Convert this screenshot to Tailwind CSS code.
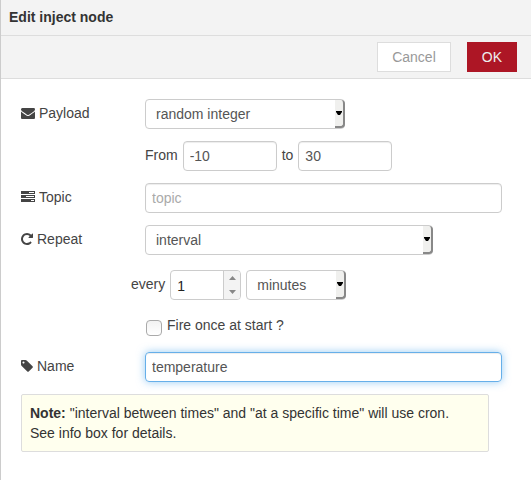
<!DOCTYPE html>
<html lang="en">
<head>
<meta charset="utf-8">
<meta name="viewport" content="width=device-width, initial-scale=1">
<title>Edit inject node</title>
<script src="https://cdn.jsdelivr.net/npm/@tailwindcss/browser@4"></script>
</head>
<body class="bg-white">
<main class="min-h-screen border-l border-[#ccc] font-['Liberation_Sans',Arial,sans-serif] text-sm leading-5 text-[#444]">
  <header class="border-b border-[#ddd] bg-[#f3f3f3] px-2 pt-[7px] pb-2">
    <h1 class="font-bold text-[#333]">Edit inject node</h1>
  </header>
  <div class="flex justify-end gap-4 border-b border-[#ddd] bg-[#f3f3f3] py-1.5 pr-3.5">
    <button type="button" class="h-[30px] border border-[#ddd] bg-white px-3.5 text-[#999]">Cancel</button>
    <button type="button" class="h-[30px] border border-[#ad1625] bg-[#ad1625] px-3.5 text-[#eee]">OK</button>
  </div>

  <form class="pt-5 pr-[29px] pl-5">
    <div class="flex items-center">
      <label for="payload" class="flex w-[124px] items-center gap-1 pb-0.5">
        <svg class="size-3.5" viewBox="0 0 1792 1792" fill="currentColor" aria-hidden="true"><path d="M1792 710v794q0 66-47 113t-113 47h-1472q-66 0-113-47t-47-113v-794q44 49 101 87 362 246 497 345 57 42 92.5 65.5t94.5 48 110 24.5h2q51 0 110-24.5t94.5-48 92.5-65.5q170-123 498-345 57-39 100-87zm0-294q0 79-49 151t-122 123q-376 261-468 325-10 7-42.5 31t-54 38.5-52 32.5-57.5 27-50 9h-2q-23 0-50-9t-57.5-27-52-32.5-54-38.5-42.5-31q-91-64-262-182.5t-205-142.5q-62-42-117-115.5t-55-136.5q0-78 41.5-130t118.5-52h1472q65 0 112.5 47t47.5 113z"/></svg>
        Payload
      </label>
      <div class="relative">
        <select id="payload" class="h-[30px] w-[200px] appearance-none rounded border border-[#ccc] bg-white px-2.5 text-[#555]"><option>random integer</option></select>
        <span class="pointer-events-none absolute inset-y-px right-0 flex w-2.5 items-center justify-center rounded-r border-r-2 border-b-2 border-[#888] bg-[#f0f0ee]"><svg class="h-1 w-1.5" viewBox="0 0 6 4" aria-hidden="true"><path d="M0 0h6v1L4 4H2L0 1z"/></svg></span>
      </div>
    </div>

    <div class="mt-3 flex items-center gap-[5px] pl-[124px]">
      <label for="from" class="pb-0.5">From</label>
      <input id="from" type="text" value="-10" class="h-[30px] w-[94px] rounded border border-[#ccc] px-1.5 text-[#555] shadow-[inset_0_1px_1px_rgba(0,0,0,0.075)]">
      <label for="to" class="pb-0.5">to</label>
      <input id="to" type="text" value="30" class="h-[30px] w-[94px] rounded border border-[#ccc] px-1.5 text-[#555] shadow-[inset_0_1px_1px_rgba(0,0,0,0.075)]">
    </div>

    <div class="mt-3 flex items-center">
      <label for="topic" class="flex w-[124px] items-center gap-1 pb-0.5">
        <svg class="size-3.5" viewBox="0 0 14 14" fill="currentColor" fill-rule="evenodd" aria-hidden="true"><path d="M0 1h14v3H0zM8 2v1h5V2zM0 5h14v3H0zM5 6v1h8V6zM0 9h14v3H0zM10 10v1h3v-1z"/></svg>
        Topic
      </label>
      <input id="topic" type="text" placeholder="topic" class="h-[30px] min-w-0 flex-1 rounded border border-[#ccc] px-1.5 text-[#555] shadow-[inset_0_1px_1px_rgba(0,0,0,0.075)] placeholder:text-[#aaa]">
    </div>

    <div class="mt-3 flex items-center">
      <label for="repeat" class="flex w-[124px] items-center gap-1 pb-0.5">
        <svg class="h-3.5 w-3" viewBox="128 0 1536 1792" fill="currentColor" aria-hidden="true"><path d="M1664 256v448q0 26-19 45t-45 19h-448q-42 0-59-40-17-39 14-69l138-138q-148-137-349-137-104 0-198.500 40.500t-163.500 109.500-109.500 163.500-40.500 198.500 40.500 198.500 109.500 163.500 163.500 109.500 198.500 40.500q119 0 225-52t179-147q7-10 23-12 15 0 25 9l137 138q9 8 9.500 20.500t-7.500 22.500q-109 132-264 204.500t-327 72.500q-156 0-298-61t-245-164-164-245-61-298 61-298 164-245 245-164 298-61q147 0 284.500 55.500t244.500 156.500l130-129q29-31 70-14 39 17 39 59z"/></svg>
        Repeat
      </label>
      <div class="relative">
        <select id="repeat" class="h-[30px] w-[288px] appearance-none rounded border border-[#ccc] bg-white px-2.5 text-[#555]"><option>interval</option></select>
        <span class="pointer-events-none absolute inset-y-px right-0 flex w-2.5 items-center justify-center rounded-r border-r-2 border-b-2 border-[#888] bg-[#f0f0ee]"><svg class="h-1 w-1.5" viewBox="0 0 6 4" aria-hidden="true"><path d="M0 0h6v1L4 4H2L0 1z"/></svg></span>
      </div>
    </div>

    <div class="mt-[15px] flex items-center gap-[5px] pl-[110px]">
      <label for="count" class="pb-0.5">every</label>
      <div class="flex h-[30px] w-[71px] overflow-hidden rounded border border-[#ccc]">
        <input id="count" type="text" inputmode="numeric" value="1" class="min-w-0 flex-1 px-1.5 pt-0.5 text-[#222]">
        <div class="flex w-[17px] flex-col border-l border-[#ccc] bg-[#f3f3f3]">
          <button type="button" aria-label="Increase" class="flex flex-1 items-center justify-center"><svg class="h-1 w-[7px]" viewBox="0 0 7 4" fill="#888"><path d="M0 4h7L3.500 0z"/></svg></button>
          <button type="button" aria-label="Decrease" class="flex flex-1 items-center justify-center"><svg class="h-1 w-[7px]" viewBox="0 0 7 4" fill="#888"><path d="M0 0h7L3.500 4z"/></svg></button>
        </div>
      </div>
      <div class="relative">
        <select id="unit" aria-label="Unit" class="h-[30px] w-[100px] appearance-none rounded border border-[#ccc] bg-white px-2.5 text-[#555]"><option>minutes</option></select>
        <span class="pointer-events-none absolute inset-y-px right-0 flex w-2.5 items-center justify-center rounded-r border-r-2 border-b-2 border-[#888] bg-[#f0f0ee]"><svg class="h-1 w-1.5" viewBox="0 0 6 4" aria-hidden="true"><path d="M0 0h6v1L4 4H2L0 1z"/></svg></span>
      </div>
    </div>

    <div class="mt-[15px] flex items-start gap-[5px] pl-[125px]">
      <input id="once" type="checkbox" class="mt-[5px] size-4 appearance-none rounded border border-[#aaa] bg-linear-to-b from-[#f2f2f2] to-white">
      <label for="once">Fire once at start ?</label>
    </div>

    <div class="mt-4 flex items-center">
      <label for="name" class="flex w-[124px] items-center gap-1 pb-0.5">
        <svg class="h-3.5 w-3" viewBox="128 0 1536 1792" fill="currentColor" aria-hidden="true"><path d="M576 448q0-53-37.500-90.500t-90.500-37.500-90.500 37.500-37.500 90.500 37.500 90.500 90.500 37.500 90.500-37.500 37.500-90.500zm1067 576q0 53-37 90l-491 492q-39 37-91 37-53 0-90-37l-715-716q-38-37-64.500-101t-26.500-117v-416q0-52 38-90t90-38h416q53 0 117 26.500t102 64.500l715 714q37 39 37 91z"/></svg>
        Name
      </label>
      <input id="name" type="text" value="temperature" class="h-[30px] min-w-0 flex-1 rounded border border-[#66afe9] px-1.5 text-[#555] shadow-[inset_0_1px_1px_rgba(0,0,0,0.075),0_0_8px_rgba(82,168,236,0.6)] outline-none">
    </div>

    <p class="mt-3 mr-[13px] rounded-xs border border-[#ddd] bg-[#ffffee] p-2 text-[#333]"><strong>Note:</strong> "interval between times" and "at a specific time" will use cron.<br>See info box for details.</p>
  </form>
</main>
</body>
</html>
